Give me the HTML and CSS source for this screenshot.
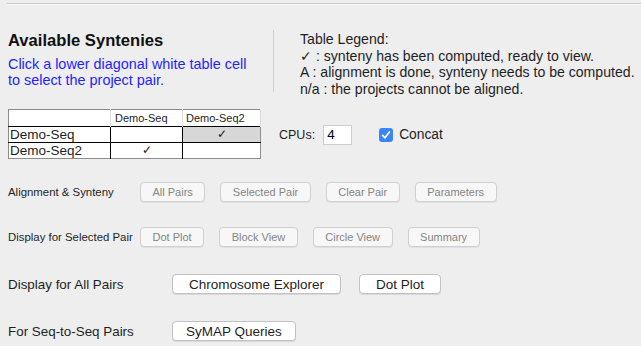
FILE: index.html
```html
<!DOCTYPE html>
<html lang="en">
<head>
    <meta charset="UTF-8">
    <title>Available Syntenies</title>
    <link rel="stylesheet" href="styles.css">
</head>
<body>
    <div class="top-rule"></div>

    <div class="header">
        <div class="intro">
            <h2>Available Syntenies</h2>
            <div class="hint">Click a lower diagonal white table cell<br>to select the project pair.</div>
        </div>
        <div class="divider"></div>
        <div class="legend">
            <div>Table Legend:</div>
            <div>&#10003; : synteny has been computed, ready to view.</div>
            <div>A : alignment is done, synteny needs to be computed.</div>
            <div>n/a : the projects cannot be aligned.</div>
        </div>
    </div>

    <div class="table-row">
        <table class="pair-table">
            <thead>
                <tr>
                    <th class="name-col"></th>
                    <th class="seq-col">Demo-Seq</th>
                    <th class="seq2-col">Demo-Seq2</th>
                </tr>
            </thead>
            <tbody>
                <tr>
                    <td>Demo-Seq</td>
                    <td></td>
                    <td class="done">&#10003;</td>
                </tr>
                <tr>
                    <td>Demo-Seq2</td>
                    <td class="mark">&#10003;</td>
                    <td></td>
                </tr>
            </tbody>
        </table>
        <label class="cpus">CPUs: <input type="text" value="4"></label>
        <label class="concat"><span class="check">
            <svg width="14" height="14" viewBox="0 0 14 14"><path d="M3.6 7.3 L6 9.8 L10.4 4" fill="none" stroke="#fff" stroke-width="1.7" stroke-linecap="round" stroke-linejoin="round"/></svg>
        </span>Concat</label>
    </div>

    <div class="actions">
        <div class="action-row">
            <span class="row-label">Alignment &amp; Synteny</span>
            <button class="btn" disabled>All Pairs</button>
            <button class="btn" disabled>Selected Pair</button>
            <button class="btn" disabled>Clear Pair</button>
            <button class="btn" disabled>Parameters</button>
        </div>
        <div class="action-row">
            <span class="row-label">Display for Selected Pair</span>
            <button class="btn" disabled>Dot Plot</button>
            <button class="btn" disabled>Block View</button>
            <button class="btn" disabled>Circle View</button>
            <button class="btn" disabled>Summary</button>
        </div>
    </div>

    <div class="actions wide">
        <div class="action-row">
            <span class="row-label">Display for All Pairs</span>
            <button class="btn">Chromosome Explorer</button>
            <button class="btn">Dot Plot</button>
        </div>
        <div class="action-row">
            <span class="row-label">For Seq-to-Seq Pairs</span>
            <button class="btn narrow">SyMAP Queries</button>
        </div>
    </div>
</body>
</html>
```

FILE: styles.css
```css
body {
    font-family: "Liberation Sans", Arial, sans-serif;
    font-size: 13px;
    margin: 0;
    background-color: #eeeeee;
    color: #1e1e1e;
    width: 641px;
    height: 346px;
    overflow: hidden;
}
.top-rule {
    margin: 3px 0 0 7px;
    border-top: 1px solid #c9c9c9;
    border-bottom: 1px solid #f8f8f8;
}
.header {
    display: flex;
    padding: 25px 0 0 8px;
    height: 80px;
    box-sizing: border-box;
}
.intro {
    width: 265px;
}
.intro h2 {
    font-size: 16.6px;
    line-height: 20px;
    margin: 1px 0 5px;
    color: #111;
}
.hint {
    color: #1f1fff;
    font-size: 14.4px;
    line-height: 16px;
}
.divider {
    width: 1px;
    height: 62px;
    background-color: #d2d2d2;
}
.legend {
    padding-left: 26px;
    padding-top: 1px;
    line-height: 16.5px;
    font-size: 14.1px;
}
.table-row {
    display: flex;
    align-items: center;
    padding: 24px 0 0 8px;
}
.pair-table {
    border-collapse: collapse;
    border: 1px solid #8c8c8c;
    background-color: #fff;
    font-size: 13.5px;
}
.pair-table th {
    font-weight: normal;
    font-size: 11px;
    height: 16px;
    padding: 0;
    border-left: 1px solid #dedede;
    border-right: 1px solid #dedede;
    text-align: left;
}
.pair-table th.name-col {
    width: 101px;
    border-left: none;
}
.pair-table th.seq-col {
    width: 67px;
    padding-left: 4px;
}
.pair-table th.seq2-col {
    width: 74px;
    padding-left: 3px;
}
.pair-table td {
    height: 15px;
    line-height: 15px;
    padding: 0 1px;
    border-top: 1px solid #000;
    border-left: 1px solid #000;
}
.pair-table td:first-child {
    border-left: none;
}
.pair-table td.done {
    background-color: #d7d7d7;
    text-align: center;
    font-size: 12px;
}
.pair-table td.mark {
    text-align: center;
    font-size: 12px;
}
.cpus {
    margin-left: 18px;
    margin-top: 1px;
    display: flex;
    align-items: center;
    gap: 8px;
    font-size: 12.5px;
}
.cpus input {
    width: 29px;
    height: 20px;
    border: 1px solid #cdcdcd;
    padding: 0 3px;
    font-family: inherit;
    font-size: 13.5px;
    box-sizing: border-box;
}
.concat {
    margin-left: 27px;
    margin-top: 1px;
    display: flex;
    align-items: center;
    gap: 6px;
    font-size: 13.8px;
}
.check {
    width: 14px;
    height: 14px;
    border-radius: 3px;
    background-color: #3b86f7;
    display: flex;
}
.actions {
    padding: 23px 0 0 8px;
    display: flex;
    flex-direction: column;
    gap: 25px;
    font-size: 11.4px;
}
.actions.wide {
    padding-top: 27px;
    gap: 27px;
    font-size: 13.4px;
}
.action-row {
    display: flex;
    align-items: center;
    gap: 15px;
    height: 20px;
}
.row-label {
    flex: 0 0 117px;
    min-width: 0;
    white-space: nowrap;
}
.wide .row-label {
    flex-basis: 146px;
}
.wide .action-row {
    gap: 18px;
}
.btn {
    height: 20px;
    padding: 0 16px;
    font-family: inherit;
    font-size: 13.5px;
    color: #1e1e1e;
    background-color: #fff;
    border: 1px solid #c2c2c2;
    border-radius: 4px;
    box-shadow: 0 1px 0 #d9d9d9;
}
.btn.narrow {
    padding: 0 13px;
}
.btn:disabled {
    font-size: 11px;
    padding: 0 11.5px;
    color: #858585;
    background-color: #f7f7f7;
    border-color: #d0d0d0;
    box-shadow: 0 1px 0 #e0e0e0;
}
```
